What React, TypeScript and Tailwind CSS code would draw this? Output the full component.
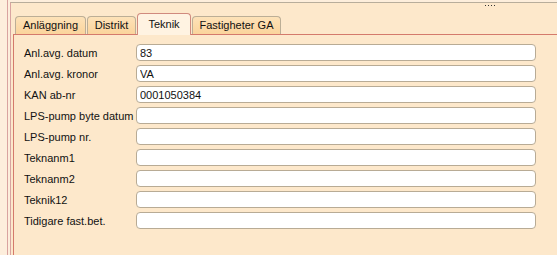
import React from 'react'

const rows: { label: string; value: string }[] = [
  { label: 'Anl.avg. datum', value: '83' },
  { label: 'Anl.avg. kronor', value: 'VA' },
  { label: 'KAN ab-nr', value: '0001050384' },
  { label: 'LPS-pump byte datum', value: '' },
  { label: 'LPS-pump nr.', value: '' },
  { label: 'Teknanm1', value: '' },
  { label: 'Teknanm2', value: '' },
  { label: 'Teknik12', value: '' },
  { label: 'Tidigare fast.bet.', value: '' },
]

const tabs = [
  { name: 'Anläggning', width: 'w-[71px]' },
  { name: 'Distrikt', width: 'w-[49px]' },
  { name: 'Teknik', width: 'w-[54px]', active: true },
  { name: 'Fastigheter GA', width: 'w-[89px]' },
]

export default function App() {
  return (
    <div
      className="w-[557px] h-[255px] overflow-hidden bg-[#fdeedc] flex text-[11px] text-[#111]"
      style={{ fontFamily: '"Liberation Sans", Arial, sans-serif' }}
    >
      <div className="w-[7px] shrink-0" />
      <div className="flex-1 border-l border-[#d9a3a0] pl-[2px] flex">
        <div className="flex-1 mt-[2px] border-l border-t border-l-[#d9a3a0] border-t-[#b8ad9b] bg-[#fde8cb] relative">
          {/* dots in the header */}
          <div className="absolute left-[474px] top-[2px] flex gap-[2px]">
            {[0, 1, 2, 3].map((i) => (
              <span key={i} className="w-[1px] h-[1px] bg-[#333]" />
            ))}
          </div>

          <div className="pl-[2px] pt-[10px]">
            {/* Tabs */}
            <div className="flex items-end h-[21px] pl-[2px] gap-[1px] relative z-10">
              {tabs.map((t) =>
                t.active ? (
                  <div
                    key={t.name}
                    className={`${t.width} h-[22px] -mb-[1px] pb-[1px] rounded-t-[4px] border border-b-0 border-[#d08a7e] bg-[#fff3e2] flex items-center justify-center`}
                  >
                    {t.name}
                  </div>
                ) : (
                  <div
                    key={t.name}
                    className={`${t.width} h-[18px] rounded-t-[4px] border border-b-0 border-[#bcae96] bg-gradient-to-b from-[#fde2b8] to-[#fbd49c] flex items-center justify-center`}
                  >
                    {t.name}
                  </div>
                )
              )}
            </div>

            {/* Panel */}
            <div className="border-t border-l border-[#d47a6c] h-[240px] pt-[7px] pl-[10px]">
              {rows.map((r) => (
                <div key={r.label} className="flex items-center h-[21px]">
                  <div className="w-[112px] shrink-0 whitespace-nowrap leading-[14px]">{r.label}</div>
                  <input
                    readOnly
                    value={r.value}
                    className="w-[400px] h-[17px] bg-white border border-[#b8ab95] rounded-[4px] px-[3px] text-[11px] leading-[15px] text-[#111] outline-none"
                    style={{ fontFamily: '"Liberation Sans", Arial, sans-serif' }}
                  />
                </div>
              ))}
            </div>
          </div>
        </div>
      </div>
    </div>
  )
}
